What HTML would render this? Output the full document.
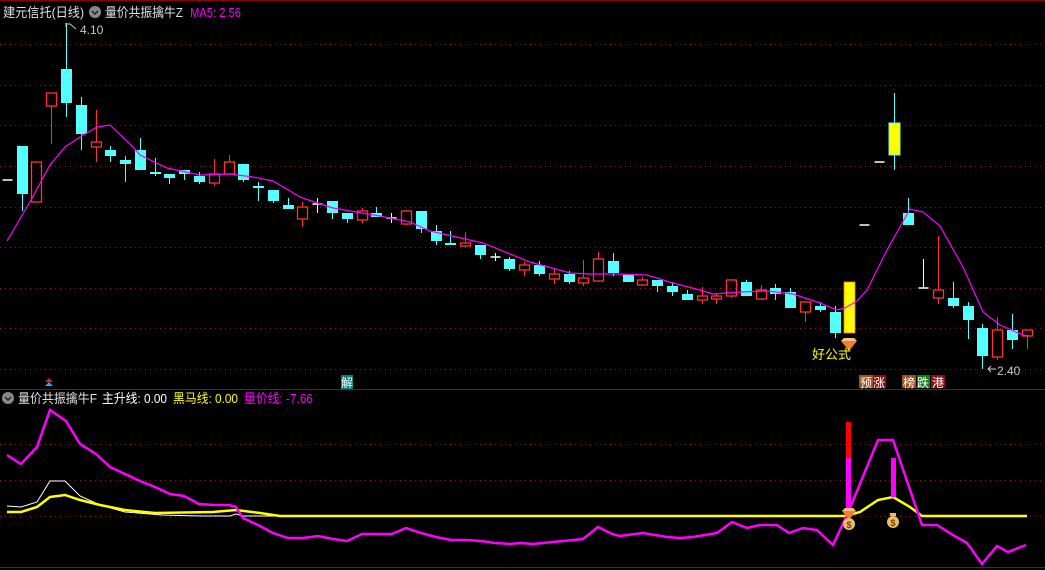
<!DOCTYPE html>
<html><head><meta charset="utf-8"><style>
html,body{margin:0;padding:0;background:#000;width:1045px;height:570px;overflow:hidden}
svg{display:block}
text{font-family:"Liberation Sans","Noto Sans CJK SC",sans-serif}
</style></head><body>
<svg id="s" width="1045" height="570" viewBox="0 0 1045 570" xmlns="http://www.w3.org/2000/svg">
<rect width="1045" height="570" fill="#000"/>
<line x1="0" y1="0.5" x2="1045" y2="0.5" stroke="#8b0000"/>
<g stroke="#a01010" stroke-width="1" stroke-dasharray="1,4">
<line x1="0" y1="44.5" x2="1045" y2="44.5"/><line x1="0" y1="85.5" x2="1045" y2="85.5"/>
<line x1="0" y1="125.5" x2="1045" y2="125.5"/><line x1="0" y1="166.5" x2="1045" y2="166.5"/>
<line x1="0" y1="207.5" x2="1045" y2="207.5"/><line x1="0" y1="247.5" x2="1045" y2="247.5"/>
<line x1="0" y1="288.5" x2="1045" y2="288.5"/><line x1="0" y1="328.5" x2="1045" y2="328.5"/>
<line x1="0" y1="369.5" x2="1045" y2="369.5"/>
<line x1="0" y1="444.5" x2="1045" y2="444.5"/><line x1="0" y1="480.5" x2="1045" y2="480.5"/>
<line x1="0" y1="516.5" x2="1045" y2="516.5"/>
</g>
<line x1="0" y1="389.5" x2="1045" y2="389.5" stroke="#b00000"/>
<line x1="0" y1="567.5" x2="1045" y2="567.5" stroke="#b00000"/>
<g id="candles"></g>
<polyline fill="none" stroke="#ff00ff" stroke-width="1.2" points="7,241 31,200 50,165 65,147 80,137 97,127 110,125 133,147 140,155 167,168 200,175 230,174 253,177 273,181 300,197 317,203 333,208 350,211 380,216 410,222 430,231 483,243 530,262 570,273 590,274 617,274 647,275 673,283 700,290 713,294 740,292 767,291 793,294 820,303 837,310 845,308 857,301 867,290 887,250 910,209 923,212 940,226 963,267 983,312 1000,325 1023,335 1030,336"/>
<polyline fill="none" stroke="#ffffff" stroke-width="1" points="7,506 21,507 37,502 50,481 65,481 80,496 100,505 125,512 162,515 200,516 230,516 236,514 243,516 280,516"/>
<polyline fill="none" stroke="#ffff00" stroke-width="2.5" points="7,512 21,512 37,507 50,497 65,495 80,500 100,505 125,510 155,513 213,512 236,510 260,513 280,516 846,516 860,512 878,500 893,497 910,507 922,516 1027,516"/>
<polyline fill="none" stroke="#ff00ff" stroke-width="2.5" points="7,455 21,464 37,447 50,410 66,421 80,444 96,454 110,467 125,474 140,481 155,487 170,494 184,496 199,504 214,505 229,505 236,507 243,518 258,525 273,533 288,538 303,538 318,536 333,539 347,541 362,534 377,534 392,534 406,528 421,533 436,537 451,540 466,540 481,541 495,543 510,544 520,543 533,544 553,542 583,539 598,527 612,534 620,536 643,533 667,537 680,538 693,537 717,533 732,522 747,528 760,525 777,525 789,533 803,528 817,530 833,545 848,513 878,440 893,440 922,525 937,525 953,535 967,543 982,564 997,546 1008,552 1026,545"/>
<rect x="846" y="422" width="5" height="36" fill="#ff0000"/>
<rect x="846" y="458" width="5" height="54" fill="#ff00ff"/>
<rect x="891" y="458" width="5" height="39" fill="#ff00ff"/>
<g transform="translate(849,345)"><polygon points="-8,-4 8,-4 0,6" fill="#f08030"/><polygon points="-8,-4 8,-4 5,-7 -5,-7" fill="#ffc080"/></g>
<g transform="translate(849,515)"><polygon points="-7,-4 7,-4 0,5" fill="#f08030"/><polygon points="-7,-4 7,-4 4,-7 -4,-7" fill="#ffc080"/></g>
<g transform="translate(849,524)"><circle r="6" fill="#e8c060"/><text x="0" y="4" font-size="9" fill="#7a3a10" text-anchor="middle" font-weight="bold">$</text></g>
<g transform="translate(893,522)"><circle r="6" fill="#e8c060"/><rect x="-3" y="-9" width="6" height="3" fill="#e8c060"/><text x="0" y="4" font-size="9" fill="#7a3a10" text-anchor="middle" font-weight="bold">$</text></g>
<text x="3" y="17" font-size="13" fill="#e0e0e0" textLength="81" lengthAdjust="spacingAndGlyphs">建元信托(日线)</text>
<circle cx="95" cy="12" r="6" fill="#888"/><path d="M92 11 L95 14 L98 11" stroke="#222" stroke-width="1.5" fill="none"/>
<text x="105" y="17" font-size="13" fill="#e0e0e0" textLength="78" lengthAdjust="spacingAndGlyphs">量价共振擒牛Z</text>
<text x="190" y="17" font-size="13" fill="#ff00ff" textLength="51" lengthAdjust="spacingAndGlyphs">MA5: 2.56</text>
<circle cx="8" cy="398" r="6" fill="#888"/><path d="M5 397 L8 400 L11 397" stroke="#222" stroke-width="1.5" fill="none"/>
<text x="18" y="403" font-size="13" fill="#e0e0e0" textLength="79" lengthAdjust="spacingAndGlyphs">量价共振擒牛F</text>
<text x="102" y="403" font-size="13" fill="#ffffff" textLength="65" lengthAdjust="spacingAndGlyphs">主升线: 0.00</text>
<text x="173" y="403" font-size="13" fill="#ffff00" textLength="65" lengthAdjust="spacingAndGlyphs">黑马线: 0.00</text>
<text x="244" y="403" font-size="13" fill="#ff00ff" textLength="69" lengthAdjust="spacingAndGlyphs">量价线: -7.66</text>
<line x1="66" y1="23" x2="66" y2="27" stroke="#ccc"/>
<path d="M66 24 L70 24 L76 29" stroke="#ccc" fill="none"/>
<text x="80" y="34" font-size="12" fill="#c8c8c8">4.10</text>
<path d="M996 369 L988 369 M991 366 L988 369 L991 372" stroke="#ccc" fill="none"/>
<text x="997" y="375" font-size="12" fill="#c8c8c8">2.40</text>
<text x="812" y="359" font-size="13" fill="#ffff00">好公式</text>
<g font-size="12" fill="#fff">
<rect x="341" y="375" width="12" height="14" fill="#008080"/><text x="341" y="387">解</text>
<rect x="859" y="375" width="14" height="13" fill="#a0501a"/><text x="860" y="387">预</text>
<rect x="873" y="375" width="13" height="13" fill="#8b1010"/><text x="873" y="387">涨</text>
<rect x="902" y="375" width="14" height="13" fill="#a0501a"/><text x="903" y="387">榜</text>
<rect x="917" y="375" width="13" height="13" fill="#108010"/><text x="917" y="387">跌</text>
<rect x="931" y="375" width="14" height="13" fill="#8b1010"/><text x="932" y="387">港</text>
</g>
<polygon points="49,378 53,382 45,382" fill="#e02020"/><polygon points="49,382 53,386 45,386" fill="#30a0ff"/>
</svg>
<script>
var D=[
[180,180,null,null,'w'],[146,194,null,211,'c'],[162,202,null,null,'r'],[93,106,null,144,'r'],[69,103,23,117,'c'],
[105,134,97,150,'c'],[142,147,110,162,'r'],[150,156,146,162,'c'],[160,164,156,182,'c'],[150,170,138,null,'c'],
[172,174,158,176,'c'],[174,178,null,184,'c'],[170,174,null,180,'c'],[176,182,172,184,'c'],[174,183,159,186,'r'],
[162,174,155,null,'r'],[164,180,null,182,'c'],[186,188,182,201,'c'],[190,201,null,203,'c'],[205,209,198,null,'c'],
[207,219,202,227,'r'],[204,204,198,213,'w'],[201,213,null,219,'c'],[213,219,null,223,'c'],[211,220,208,223,'r'],
[213,217,207,null,'c'],[218,218,213,223,'w'],[211,224,210,225,'r'],[211,229,null,233,'c'],[231,241,225,245,'c'],
[243,245,231,null,'c'],[243,246,232,247,'r'],[245,255,null,259,'c'],[257,257,253,261,'w'],[259,269,257,271,'c'],
[265,270,262,276,'r'],[265,274,261,276,'c'],[274,279,269,284,'r'],[274,282,271,284,'c'],[278,283,260,286,'r'],
[259,281,252,282,'r'],[261,273,253,276,'c'],[274,282,null,null,'c'],[280,285,277,286,'r'],[280,286,null,292,'c'],
[286,292,282,296,'c'],[294,300,290,null,'c'],[296,300,287,304,'r'],[296,299,293,304,'r'],[280,296,279,298,'r'],
[282,296,280,null,'c'],[290,299,285,300,'r'],[288,294,284,300,'c'],[292,308,288,null,'c'],[302,312,null,322,'r'],
[306,310,302,312,'c'],[312,333,306,338,'c'],[282,333,null,null,'y'],[225,225,null,null,'w'],[162,162,null,null,'w'],
[123,155,93,170,'yc'],[213,225,198,null,'c'],[288,288,259,null,'w'],[290,298,236,304,'r'],[298,306,282,308,'c'],
[306,320,302,339,'c'],[328,356,324,369,'c'],[330,357,317,360,'r'],[330,340,314,349,'c'],[330,336,null,349,'r']];
var g=document.getElementById('candles'),h='';
D.forEach(function(d,i){
 var x=Math.round(6.9+14.78*i)+0.5,t=d[0],b=d[1],hi=d[2],lo=d[3],k=d[4];
 var col=k=='c'?'#54ffff':k=='r'?'#ff3232':k=='w'?'#ffffff':k=='yc'?'#54ffff':'#ff8000';
 if(hi!==null)h+='<line x1="'+x+'" y1="'+hi+'" x2="'+x+'" y2="'+t+'" stroke="'+col+'"/>';
 if(lo!==null)h+='<line x1="'+x+'" y1="'+b+'" x2="'+x+'" y2="'+lo+'" stroke="'+col+'"/>';
 if(k=='w'){h+='<line x1="'+(x-5)+'" y1="'+t+'" x2="'+(x+5)+'" y2="'+t+'" stroke="#fff" stroke-width="1.5"/>';}
 else if(k=='r'){h+='<rect x="'+(x-5)+'" y="'+t+'" width="10" height="'+Math.max(b-t,2)+'" fill="none" stroke="#ff3232" stroke-width="1.3"/>';}
 else if(k=='c'){h+='<rect x="'+(x-5.5)+'" y="'+t+'" width="11" height="'+Math.max(b-t,2)+'" fill="#54ffff"/>';}
 else if(k=='y'){h+='<rect x="'+(x-5.5)+'" y="'+t+'" width="11" height="'+(b-t)+'" fill="#ffff00" stroke="#ff8000" stroke-width="0.8"/>';}
 else {h+='<rect x="'+(x-5.5)+'" y="'+t+'" width="11" height="'+(b-t)+'" fill="#ffff00" stroke="#54ffff" stroke-width="1"/>';}
});
g.innerHTML=h;
</script>
</body></html>
